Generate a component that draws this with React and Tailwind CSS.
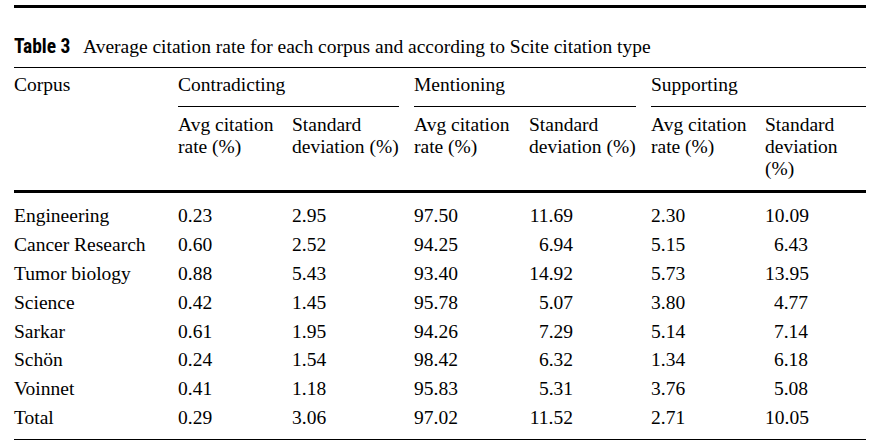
const groups = ['Contradicting', 'Mentioning', 'Supporting'];

const rows = [
  ['Engineering', '0.23', '2.95', '97.50', '11.69', '2.30', '10.09'],
  ['Cancer Research', '0.60', '2.52', '94.25', '6.94', '5.15', '6.43'],
  ['Tumor biology', '0.88', '5.43', '93.40', '14.92', '5.73', '13.95'],
  ['Science', '0.42', '1.45', '95.78', '5.07', '3.80', '4.77'],
  ['Sarkar', '0.61', '1.95', '94.26', '7.29', '5.14', '7.14'],
  ['Schön', '0.24', '1.54', '98.42', '6.32', '1.34', '6.18'],
  ['Voinnet', '0.41', '1.18', '95.83', '5.31', '3.76', '5.08'],
  ['Total', '0.29', '3.06', '97.02', '11.52', '2.71', '10.05'],
];

const cols = 'grid grid-cols-[164px_114px_122px_115px_122px_114px_101px]';

export default function App() {
  return (
    <div className="min-h-screen bg-white pt-[5px] pl-[14px] text-black [font-family:Liberation_Serif,Times_New_Roman,serif] text-[19.5px]">
      <div className="w-[852px]">
        <div className="h-[2.5px] bg-black" />

        <div className="mt-[28px] leading-[22px] whitespace-nowrap">
          <span className="inline-block w-[69px] font-bold [font-family:Roboto_Condensed,Liberation_Sans,sans-serif]">
            Table 3
          </span>
          <span>
            Average citation rate for each corpus and according to Scite citation type
          </span>
        </div>

        <div className="mt-[9.6px] h-px bg-black" />

        {/* group header */}
        <div className={`${cols} mt-[6.4px] leading-[22px]`}>
          <div>Corpus</div>
          {groups.map((g, i) => (
            <div key={g} className="col-span-2">
              <div>{g}</div>
              <div className={`mt-[9.6px] h-px bg-black ${i < 2 ? 'mr-[15px]' : ''}`} />
            </div>
          ))}
        </div>

        {/* sub header */}
        <div className={`${cols} mt-[7px] leading-[22px] h-[66px]`}>
          <div />
          <div>Avg citation<br />rate (%)</div>
          <div className="whitespace-nowrap">Standard<br />deviation (%)</div>
          <div>Avg citation<br />rate (%)</div>
          <div className="whitespace-nowrap">Standard<br />deviation (%)</div>
          <div>Avg citation<br />rate (%)</div>
          <div>Standard<br />deviation<br />(%)</div>
        </div>

        <div className="mt-[10px] h-[3px] bg-black" />

        <div className="pt-[9px] pb-[6.5px]">
          {rows.map((r) => (
            <div key={r[0]} className={`${cols} leading-[28.86px]`}>
              <div className="whitespace-nowrap">{r[0]}</div>
              <div>{r[1]}</div>
              <div>{r[2]}</div>
              <div>{r[3]}</div>
              <div><span className="inline-block w-[44px] text-right">{r[4]}</span></div>
              <div>{r[5]}</div>
              <div><span className="inline-block w-[43px] text-right">{r[6]}</span></div>
            </div>
          ))}
        </div>

        <div className="h-px bg-black" />
      </div>
    </div>
  );
}
